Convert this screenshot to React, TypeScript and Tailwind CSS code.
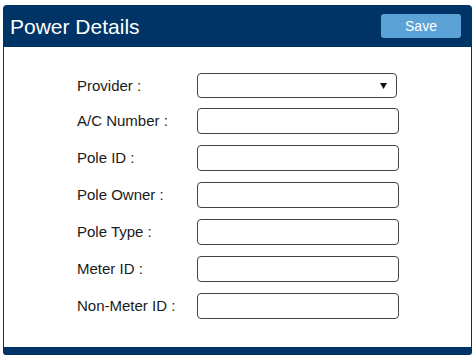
import React from "react";

const fields = [
  "A/C Number :",
  "Pole ID :",
  "Pole Owner :",
  "Pole Type :",
  "Meter ID :",
  "Non-Meter ID :",
];

const App: React.FC = () => {
  return (
    <main className="min-h-screen bg-white pt-[5px] pl-[3px] font-['Liberation_Sans',Arial,sans-serif]">
      <div className="w-[469px]">
        <header className="h-[42px] bg-[#003366] rounded-t-[4px] flex items-center justify-between pl-[7px] pr-[11px]">
          <h1 className="text-[21px] text-white leading-none">Power Details</h1>
          <button className="w-[80px] h-[24px] bg-[#5ba3d6] rounded-[3px] text-white text-[14px] leading-none">
            Save
          </button>
        </header>

        <section className="border-x border-[#003366] pt-[26px] pb-[28px] pl-[73px]">
          <div className="flex items-center h-[25px]">
            <label className="w-[120px] text-[15px] text-[#1a1a1a] pt-[1px]">Provider :</label>
            <div className="relative w-[200px] h-[25px]">
              <select className="appearance-none w-full h-full border border-[#444] rounded-[4px] bg-white" />
              <svg
                className="absolute right-[10px] top-[10px] pointer-events-none"
                width="7"
                height="6"
                viewBox="0 0 7 6"
              >
                <path d="M0 0 H7 L3.5 6 Z" fill="#111" />
              </svg>
            </div>
          </div>
          <div className="flex flex-col gap-[11px] mt-[10px]">
            {fields.map((field) => (
              <div key={field} className="flex items-center h-[26px]">
                <label className="w-[120px] text-[15px] text-[#1a1a1a] pt-[1px]">{field}</label>
                <input
                  type="text"
                  className="w-[202px] h-[26px] border border-[#444] rounded-[4px] bg-white"
                />
              </div>
            ))}
          </div>
        </section>

        <footer className="h-[8px] bg-[#003366] rounded-b-[3px]" />
      </div>
    </main>
  );
};

export default App;
